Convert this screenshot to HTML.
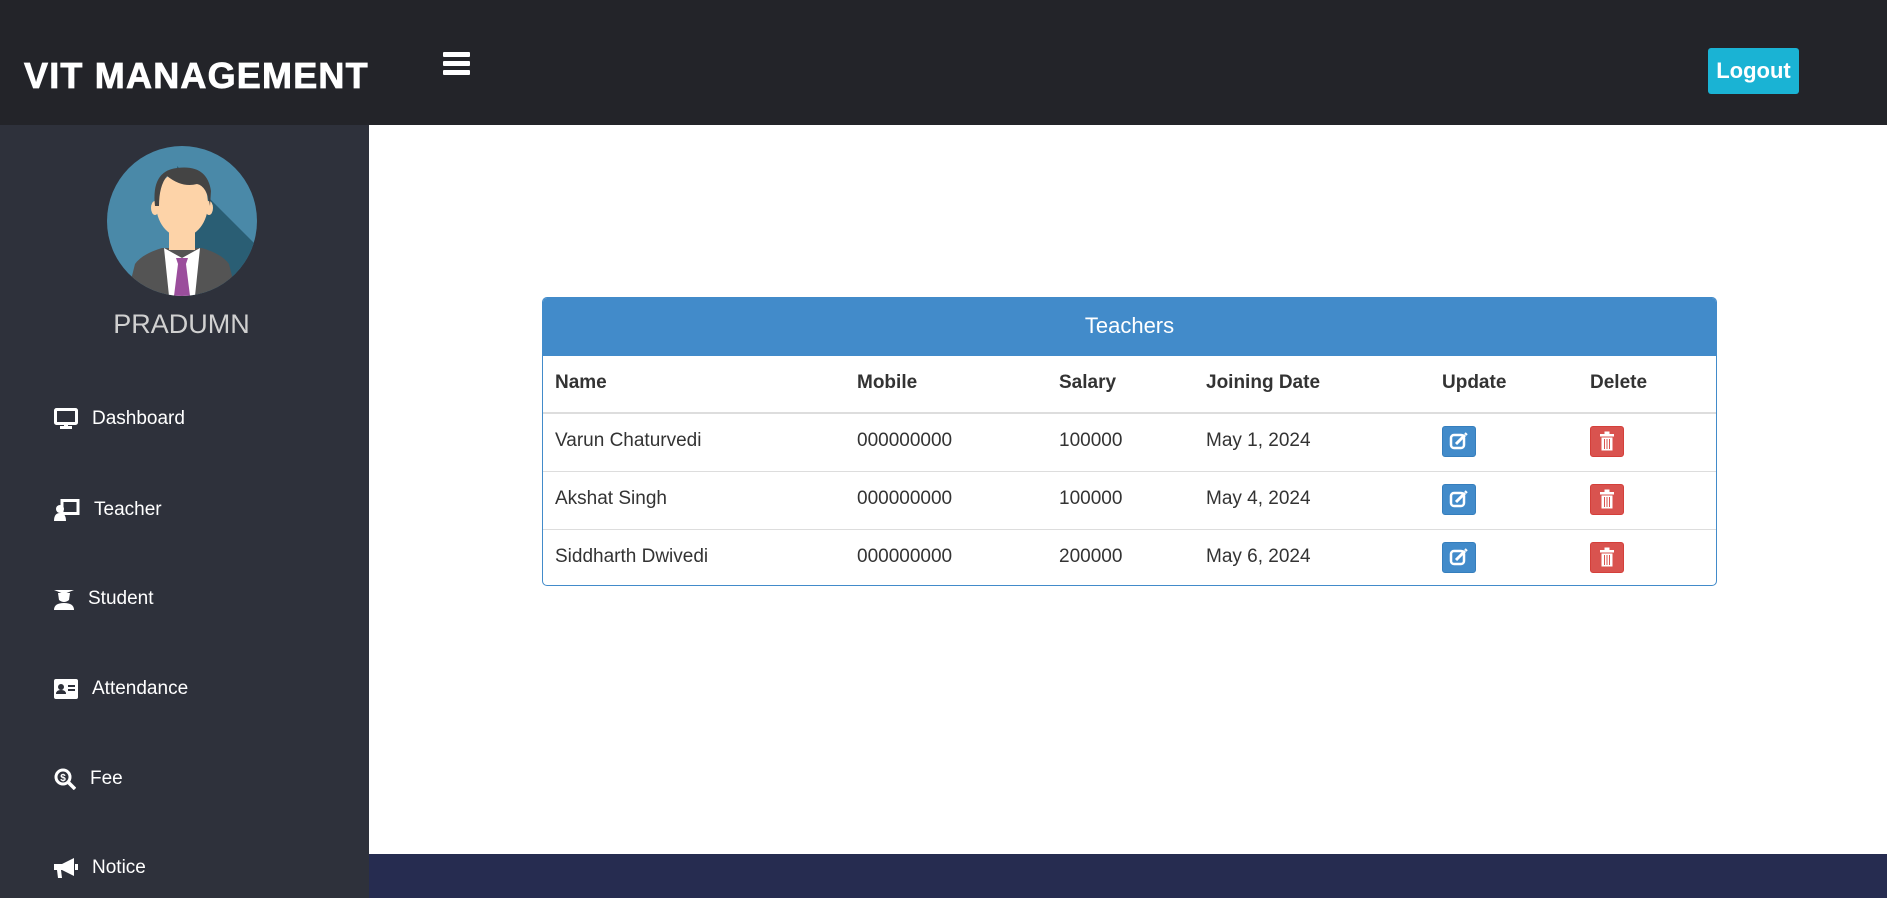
<!DOCTYPE html>
<html><head><meta charset="utf-8"><style>
*{margin:0;padding:0;box-sizing:border-box}
body{width:1887px;height:898px;overflow:hidden;font-family:"Liberation Sans",Arial,sans-serif;background:#fff;position:relative}
.top{position:absolute;left:0;top:0;width:1887px;height:125px;background:#232429}
.brand{position:absolute;left:24px;top:56px;color:#fff;font-weight:900;font-size:36px;letter-spacing:1.2px;line-height:40px;-webkit-text-stroke:0.8px #fff}
.ham{position:absolute;left:443px;top:52px;width:27px}
.ham i{display:block;height:5px;background:#fff;margin-bottom:4px;border-radius:1px}
.logout{position:absolute;left:1708px;top:48px;width:91px;height:46px;background:#1ab3d4;border-radius:3px;color:#fff;font-weight:bold;font-size:22px;text-align:center;line-height:46px}
.side{position:absolute;left:0;top:125px;width:369px;height:773px;background:#2e313b}
.name{position:absolute;left:0;width:363px;text-align:center;color:#d0d0d0;font-size:27px}
.mi{position:absolute;left:54px;color:#fff;font-size:19px;display:flex;align-items:center;height:30px}
.mi svg{margin-right:14px}
.foot{position:absolute;left:369px;top:854px;width:1518px;height:44px;background:#262c50}
.panel{position:absolute;left:542px;top:297px;width:1175px;height:289px;border:1px solid #428bca;border-radius:5px;overflow:hidden}
.ph{height:58px;background:#428bca;color:#fff;font-size:22px;text-align:center;line-height:56px}
table{border-collapse:collapse;width:100%;font-size:19px;color:#333}
th{text-align:left;font-weight:bold;height:57px;border-bottom:2px solid #ddd;padding-left:12px;padding-bottom:2px}
td{height:58px;border-top:1px solid #ddd;padding-left:12px;padding-bottom:2px}
tr:nth-child(1) td{border-top:none}
.b{display:inline-block;width:34px;height:31px;border-radius:3px;vertical-align:middle;position:relative}
.bu{background:#428bca;border:1px solid #357ebd}
.bd{background:#d9534f;border:1px solid #d43f3a}
</style></head><body>
<div class="top">
<div class="brand">VIT MANAGEMENT</div>
<div class="ham"><i></i><i></i><i></i></div>
<div class="logout">Logout</div>
</div>
<div class="side">
<svg style="position:absolute;left:107px;top:21px" width="150" height="150" viewBox="0 0 150 150">
<defs><clipPath id="c"><circle cx="75" cy="75" r="75"/></clipPath></defs>
<g clip-path="url(#c)">
<rect width="150" height="150" fill="#4a89a8"/>
<path d="M70 20 L150 100 L150 150 L80 150Z" fill="#2a5e74"/>
<path d="M20 150 L28 118 Q35 108 55 102 L95 102 Q115 108 122 118 L130 150Z" fill="#545454"/>
<path d="M57 102 L75 112 L93 102 L88 150 L62 150Z" fill="#fff"/>
<path d="M69 112 L81 112 L79 118 L83 150 L67 150 L71 118Z" fill="#9b4e9c"/>
<rect x="62" y="70" width="26" height="34" fill="#fdd3a8"/>
<ellipse cx="75" cy="58" rx="26" ry="33" fill="#fdd3a8"/>
<ellipse cx="48" cy="62" rx="4" ry="7" fill="#fdd3a8"/><ellipse cx="102" cy="62" rx="4" ry="7" fill="#fdd3a8"/>
<path d="M48 60 Q44 25 70 22 Q100 18 104 45 L103 60 Q100 40 90 38 Q75 42 60 30 Q52 40 52 60Z" fill="#444"/>
</g></svg>
<div class="name" style="top:184px">PRADUMN</div>
<div class="mi" style="top:279px"><svg width="24" height="22" viewBox="0 0 24 22"><rect x="1.5" y="1.5" width="21" height="14" fill="none" stroke="#fff" stroke-width="3" rx="1"/><rect x="10" y="15" width="4" height="4" fill="#fff"/><rect x="6" y="18" width="12" height="3" fill="#fff"/></svg>Dashboard</div>
<div class="mi" style="top:370px"><svg width="26" height="22" viewBox="0 0 26 22"><rect x="8" y="1.5" width="16" height="13" fill="none" stroke="#fff" stroke-width="3"/><circle cx="6" cy="10" r="4" fill="#fff"/><path d="M0 22 Q0 14 6 14 Q12 14 12 22Z" fill="#fff"/></svg>Teacher</div>
<div class="mi" style="top:459px"><svg width="20" height="22" viewBox="0 0 20 22"><path d="M0 2 L20 2 L10 6Z" fill="#fff"/><path d="M4 5 L16 5 L15 12 Q10 16 5 12Z" fill="#fff"/><path d="M0 22 Q0 15 10 15 Q20 15 20 22Z" fill="#fff"/></svg>Student</div>
<div class="mi" style="top:549px"><svg width="24" height="20" viewBox="0 0 24 20"><rect width="24" height="20" rx="2" fill="#fff"/><circle cx="7" cy="8" r="3" fill="#2e313b"/><path d="M2 15 Q2 11 7 11 Q12 11 12 15Z" fill="#2e313b"/><rect x="14" y="6" width="7" height="2" fill="#2e313b"/><rect x="14" y="10" width="7" height="2" fill="#2e313b"/></svg>Attendance</div>
<div class="mi" style="top:639px"><svg width="22" height="22" viewBox="0 0 22 22"><circle cx="9" cy="9" r="7" fill="none" stroke="#fff" stroke-width="3"/><path d="M14 14 L21 21" stroke="#fff" stroke-width="3.5"/><text x="9" y="13" font-size="10" font-weight="bold" fill="#fff" text-anchor="middle" font-family="Liberation Sans">$</text></svg>Fee</div>
<div class="mi" style="top:728px"><svg width="24" height="22" viewBox="0 0 24 22"><path d="M0 7 L8 7 L20 1 L20 19 L8 13 L0 13Z" fill="#fff"/><path d="M3 13 L7 13 L8 21 L4 21Z" fill="#fff"/><rect x="21" y="7" width="3" height="6" fill="#fff"/></svg>Notice</div>
</div>
<div class="foot"></div>
<div class="panel">
<div class="ph">Teachers</div>
<table>
<colgroup><col style="width:302px"><col style="width:202px"><col style="width:147px"><col style="width:236px"><col style="width:148px"><col></colgroup>
<thead><tr><th>Name</th><th>Mobile</th><th>Salary</th><th>Joining Date</th><th>Update</th><th>Delete</th></tr></thead>
<tbody>
<tr><td>Varun Chaturvedi</td><td>000000000</td><td>100000</td><td>May 1, 2024</td><td><span class="b bu"><svg width="32" height="29" viewBox="0 0 32 29"><rect x="8" y="8" width="13" height="13" rx="3" fill="none" stroke="#fff" stroke-width="2.5"/><path d="M13 17 L22 8" stroke="#fff" stroke-width="3"/><path d="M22 6 L24 8" stroke="#fff" stroke-width="2"/></svg></span></td><td><span class="b bd"><svg width="32" height="29" viewBox="0 0 32 29"><rect x="9" y="7" width="14" height="2.5" fill="#fff"/><rect x="13.5" y="4.5" width="5" height="3" fill="#fff"/><rect x="10.5" y="10.5" width="11" height="13" fill="#fff"/><path d="M13.5 12v10M16 12v10M18.5 12v10" stroke="#d9534f" stroke-width="1"/></svg></span></td></tr>
<tr><td>Akshat Singh</td><td>000000000</td><td>100000</td><td>May 4, 2024</td><td><span class="b bu"><svg width="32" height="29" viewBox="0 0 32 29"><rect x="8" y="8" width="13" height="13" rx="3" fill="none" stroke="#fff" stroke-width="2.5"/><path d="M13 17 L22 8" stroke="#fff" stroke-width="3"/><path d="M22 6 L24 8" stroke="#fff" stroke-width="2"/></svg></span></td><td><span class="b bd"><svg width="32" height="29" viewBox="0 0 32 29"><rect x="9" y="7" width="14" height="2.5" fill="#fff"/><rect x="13.5" y="4.5" width="5" height="3" fill="#fff"/><rect x="10.5" y="10.5" width="11" height="13" fill="#fff"/><path d="M13.5 12v10M16 12v10M18.5 12v10" stroke="#d9534f" stroke-width="1"/></svg></span></td></tr>
<tr><td>Siddharth Dwivedi</td><td>000000000</td><td>200000</td><td>May 6, 2024</td><td><span class="b bu"><svg width="32" height="29" viewBox="0 0 32 29"><rect x="8" y="8" width="13" height="13" rx="3" fill="none" stroke="#fff" stroke-width="2.5"/><path d="M13 17 L22 8" stroke="#fff" stroke-width="3"/><path d="M22 6 L24 8" stroke="#fff" stroke-width="2"/></svg></span></td><td><span class="b bd"><svg width="32" height="29" viewBox="0 0 32 29"><rect x="9" y="7" width="14" height="2.5" fill="#fff"/><rect x="13.5" y="4.5" width="5" height="3" fill="#fff"/><rect x="10.5" y="10.5" width="11" height="13" fill="#fff"/><path d="M13.5 12v10M16 12v10M18.5 12v10" stroke="#d9534f" stroke-width="1"/></svg></span></td></tr>
</tbody></table>
</div>
</body></html>
